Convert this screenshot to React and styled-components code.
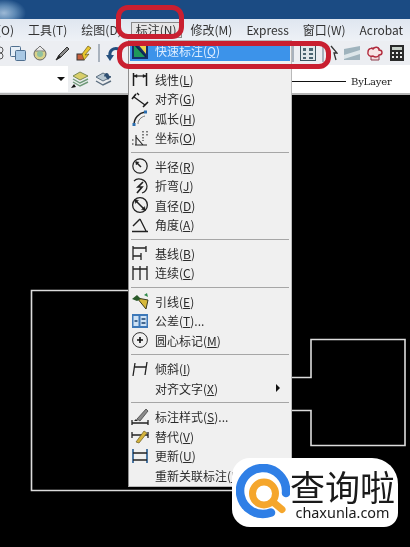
import React from "react";
import styled, { createGlobalStyle } from "styled-components";

const GlobalStyle = createGlobalStyle`
  html, body {
    margin: 0;
    padding: 0;
    background: #000;
  }
`;

const uiFont = `"Noto Sans CJK SC", "Noto Sans", sans-serif`;

// menu icons, all drawn on an 18x18 grid
const icons = {
  quick: (
    <>
      <rect x="1" y="0" width="16" height="17" fill="#14306a" />
      <path d="M3 2 L15 15 L3 15 Z" fill="#1f9a5a" />
      <path d="M6 1 L15 1 L15 12 Z" fill="#e9d44a" />
      <path d="M3 2 L15 15" stroke="#10244f" strokeWidth="1.4" />
    </>
  ),
  linear: (
    <g stroke="#1c1c1c" fill="none">
      <path d="M2.5 3 V16 M15.5 3 V16" strokeWidth="1.5" />
      <path d="M3 6 H15" strokeWidth="1.2" />
      <path d="M3 6 L6 4.5 V7.5 Z M15 6 L12 4.5 V7.5 Z" fill="#1c1c1c" strokeWidth="0.5" />
    </g>
  ),
  aligned: (
    <g stroke="#1c1c1c" fill="none">
      <path d="M3 7 L14 15" strokeWidth="1.2" />
      <path d="M1 9 L5 4 M12 17 L17 12" strokeWidth="1.6" />
      <path d="M6 3 L8 5" strokeWidth="1.4" />
    </g>
  ),
  arc: (
    <>
      <path d="M3 16 C3 9 8 4 14 3" fill="none" stroke="#222" strokeWidth="1.5" />
      <path d="M7 15 C7 11 10 8 14 7" fill="none" stroke="#777" strokeWidth="1" />
      <rect x="1.5" y="14" width="3" height="3" fill="#2c6fb0" />
      <rect x="13" y="1.5" width="3" height="3" fill="#2c6fb0" />
    </>
  ),
  ordinate: (
    <g stroke="#222" fill="none" strokeWidth="1.1">
      <path d="M4 16 H16 M5 16 V6 M12 16 L5 8" />
      <path d="M12 2 V12 M16 2 V8" strokeDasharray="1.5 1.5" />
      <path d="M1 11 H4 M1 15 H3" strokeDasharray="1.5 1.5" />
    </g>
  ),
  radius: (
    <g stroke="#222" fill="none">
      <circle cx="9" cy="9" r="7.2" strokeWidth="1.2" />
      <path d="M5 5 L10 10" strokeWidth="1.5" />
      <path d="M4.5 4.5 L8 5.2 L5.2 8 Z" fill="#222" strokeWidth="0.4" />
    </g>
  ),
  jog: (
    <g stroke="#222" fill="none">
      <path d="M3 4 C7 0 15 2 16 9 C16 12 14 15 11 16" strokeWidth="1.2" />
      <path d="M12 5 L7 10 L11 10 L6 16" strokeWidth="1.7" />
    </g>
  ),
  diameter: (
    <g stroke="#222" fill="none">
      <circle cx="9" cy="9" r="7.4" strokeWidth="1.3" />
      <path d="M5 5 L13 13" strokeWidth="1.6" />
      <path d="M3.6 3.6 L7.5 4.4 L4.4 7.5 Z M14.4 14.4 L10.5 13.6 L13.6 10.5 Z" fill="#222" strokeWidth="0.4" />
    </g>
  ),
  angle: (
    <g stroke="#222" fill="none">
      <path d="M1 15.5 H17 M9 3 L15 15" strokeWidth="1.3" />
      <path d="M2 10 L9 3" strokeWidth="1.5" />
    </g>
  ),
  baseline: (
    <g stroke="#222" fill="none" strokeWidth="1.3">
      <path d="M2 2 V16 M2 4 H15 M2 12 H10 M15 2 V8 M10 9 V16" />
    </g>
  ),
  continued: (
    <g stroke="#222" fill="none" strokeWidth="1.3">
      <path d="M2 2 V16 M9 2 V16 M16 2 V16 M2 5 H16" />
    </g>
  ),
  leader: (
    <>
      <path d="M6 6 L15 17 L17 8 Z" fill="#d8b93a" stroke="#3b3a1a" strokeWidth="1" />
      <path d="M1 7 L6 3 L10 7 L6 9 Z" fill="#2a5a2a" />
      <path d="M13 3 L16 1 L17 5 Z" fill="#2f8a4a" />
    </>
  ),
  tolerance: (
    <>
      <rect x="1" y="2" width="16" height="14" fill="#3d78b8" />
      <rect x="2.5" y="4" width="5" height="10" fill="#cfe2f4" />
      <rect x="9.5" y="4" width="6" height="10" fill="#cfe2f4" />
      <path d="M3.5 9 H6.5 M10.5 7 H14.5 M10.5 11 H14.5" stroke="#17406f" strokeWidth="1.4" />
    </>
  ),
  center: (
    <g stroke="#333" fill="none">
      <circle cx="9" cy="9" r="7.4" strokeWidth="1" />
      <path d="M6 9 H12 M9 6 V12" stroke="#111" strokeWidth="1.6" />
    </g>
  ),
  oblique: (
    <g stroke="#222" fill="none" strokeWidth="1.3">
      <path d="M4 3 L2 16 M16 2 L14 15 M3 7 H15" />
    </g>
  ),
  style: (
    <>
      <path d="M1 15 H17 M1 12 V17 M17 12 V17" stroke="#222" strokeWidth="1.3" fill="none" />
      <path d="M3 13 L5 11 L7 13 Z" fill="#222" />
      <path d="M6 11 L15 1 L17 3 L9 13 Z" fill="#8b8b8b" stroke="#333" strokeWidth="0.7" />
    </>
  ),
  override: (
    <>
      <path d="M1 5 V11 M17 5 V11 M1 8 H17" stroke="#222" strokeWidth="1.3" fill="none" />
      <path d="M5 15 L13 4 L16 6 L8 16 Z" fill="#d5b43d" stroke="#6a5a20" strokeWidth="0.7" />
    </>
  ),
  update: (
    <g fill="none">
      <path d="M2 2 V16 M16 2 V16" stroke="#23598f" strokeWidth="1.6" />
      <path d="M2 6 H16 M2 13 H16" stroke="#222" strokeWidth="1.3" />
    </g>
  ),
};

const menuRows = [
  { label: "快速标注", hot: "Q", icon: "quick", active: true },
  { sep: true },
  { label: "线性", hot: "L", icon: "linear" },
  { label: "对齐", hot: "G", icon: "aligned" },
  { label: "弧长", hot: "H", icon: "arc" },
  { label: "坐标", hot: "O", icon: "ordinate" },
  { sep: true },
  { label: "半径", hot: "R", icon: "radius" },
  { label: "折弯", hot: "J", icon: "jog" },
  { label: "直径", hot: "D", icon: "diameter" },
  { label: "角度", hot: "A", icon: "angle" },
  { sep: true },
  { label: "基线", hot: "B", icon: "baseline" },
  { label: "连续", hot: "C", icon: "continued" },
  { sep: true },
  { label: "引线", hot: "E", icon: "leader" },
  { label: "公差", hot: "T", tail: "...", icon: "tolerance" },
  { label: "圆心标记", hot: "M", icon: "center" },
  { sep: true },
  { label: "倾斜", hot: "I", icon: "oblique" },
  { label: "对齐文字", hot: "X", submenu: true },
  { sep: true },
  { label: "标注样式", hot: "S", tail: "...", icon: "style" },
  { label: "替代", hot: "V", icon: "override" },
  { label: "更新", hot: "U", icon: "update" },
  { label: "重新关联标注", hot: "R" },
];

const Screen = styled.div`
  position: relative;
  width: 410px;
  height: 547px;
  overflow: hidden;
  display: flex;
  flex-direction: column;
  background: #000;
  font-family: ${uiFont};
  filter: blur(0.35px);
`;

const TitleBar = styled.div`
  height: 19px;
  flex: none;
  background: radial-gradient(ellipse 22px 14px at 4px 13px, #9db9d6 0, #5f8ab5 50%, transparent 100%), #1b4b83;
`;

const MenuBar = styled.div`
  height: 22px;
  flex: none;
  display: flex;
  align-items: center;
  gap: 14px;
  margin-left: -3px;
  white-space: nowrap;
  overflow: hidden;
  background: linear-gradient(#dfe6f0, #eef1f6);
`;

const MenuTitle = styled.span`
  font-size: 12px;
  color: #333;
  padding: ${(p) => (p.$open ? "0 5px" : "0")};
  margin: ${(p) => (p.$open ? "0 -5px" : "0")};
  box-shadow: ${(p) => (p.$open ? "inset 0 0 0 1px #8a8a8a" : "none")};
  background: ${(p) => (p.$open ? "#e6e6e6" : "transparent")};
  line-height: 16px;
`;

const ToolBar = styled.div`
  height: 24px;
  flex: none;
  display: flex;
  align-items: center;
  gap: 6px;
  margin-left: -12px;
  background: #eceef2;
  padding-right: 6px;
`;

const ToolGap = styled.div`
  margin-left: auto;
`;

const ToolSep = styled.div`
  width: 2px;
  height: 18px;
  flex: none;
  background: #a9b2bd;
`;

const PropsBar = styled.div`
  height: 30px;
  flex: none;
  box-sizing: border-box;
  display: flex;
  align-items: center;
  gap: 6px;
  background: #eceef0;
  border-bottom: 2px solid #b5b5b5;
`;

const LayerSelect = styled.div`
  width: 68px;
  height: 26px;
  flex: none;
  box-sizing: border-box;
  background: #fff;
  display: flex;
  align-items: center;
  justify-content: flex-end;
  padding-right: 3px;
  margin-right: -3px;
`;

const SelectArrow = styled.div`
  width: 0;
  height: 0;
  border-left: 4px solid transparent;
  border-right: 4px solid transparent;
  border-top: 4px solid #111;
`;

const LineTypeBox = styled.div`
  margin-left: auto;
  width: 118px;
  align-self: stretch;
  flex: none;
  box-sizing: border-box;
  padding-top: 5px;
  background: #fff;
  display: flex;
  align-items: center;
  gap: 5px;
`;

const LineSample = styled.div`
  width: 54px;
  height: 1px;
  background: #111;
`;

const LineName = styled.span`
  font-family: "DejaVu Serif", serif;
  font-size: 10px;
  letter-spacing: -0.2px;
  color: #222;
`;

const Canvas = styled.div`
  position: relative;
  flex: 1;
  background: #000;
`;

const Drawing = styled.svg`
  position: absolute;
  inset: 0;
  display: block;
`;

const PopupMenu = styled.div`
  position: absolute;
  left: 128px;
  top: 40px;
  width: 164px;
  height: 447px;
  box-sizing: border-box;
  background: #f0f0f0;
  border: 1px solid #b9b9b9;
  border-left-color: #8f8f8f;
`;

const Row = styled.div`
  height: 19.5px;
  margin: 0 1px;
  display: grid;
  grid-template-columns: 25px 1fr 14px;
  align-items: center;
  font-size: 12px;
  line-height: 19.5px;
  white-space: nowrap;
  color: ${(p) => (p.$active ? "#dcecff" : "#2b2b2b")};
  background: ${(p) => (p.$active ? "#3c93ea" : "transparent")};
`;

const RowIcon = styled.svg`
  display: block;
  margin-left: 1px;
`;

const RowArrow = styled.div`
  width: 0;
  height: 0;
  border-top: 4px solid transparent;
  border-bottom: 4px solid transparent;
  border-left: 4px solid #111;
`;

const Separator = styled.div`
  height: 9px;
  display: flex;
  align-items: center;
  padding: 0 2px;

  &::after {
    content: "";
    flex: 1;
    height: 1px;
    background: #a6a6a6;
  }
`;

const RedRing = styled.div`
  position: absolute;
  left: ${(p) => p.$x}px;
  top: ${(p) => p.$y}px;
  width: ${(p) => p.$w}px;
  height: ${(p) => p.$h}px;
  box-sizing: border-box;
  border: 5px solid #c91f30;
  border-radius: ${(p) => p.$r}px;
`;

const Watermark = styled.div`
  position: absolute;
  left: 232px;
  top: 458px;
  width: 166px;
  height: 69px;
  box-sizing: border-box;
  padding-left: 4px;
  display: flex;
  align-items: center;
  background: #fff;
  border-radius: 18px 26px 14px 18px;
`;

const BrandText = styled.div`
  display: flex;
  flex-direction: column;
  align-items: center;
  margin-top: 3px;
  color: #1a1a1a;
`;

const BrandName = styled.div`
  font-size: 35px;
  line-height: 38px;
  white-space: nowrap;
`;

const BrandUrl = styled.div`
  font-family: "Noto Sans", sans-serif;
  font-size: 14.4px;
  line-height: 16px;
`;

function Tool({ w = 16, h = 16, children }) {
  return (
    <svg width={w} height={h} viewBox={`0 0 ${w} ${h}`} style={{ flex: "none" }}>
      {children}
    </svg>
  );
}

function MenuRow({ row }) {
  return (
    <Row $active={row.active}>
      {row.icon ? (
        <RowIcon width="18" height="18" viewBox="0 0 18 18">
          {icons[row.icon]}
        </RowIcon>
      ) : (
        <span />
      )}
      <span>
        {row.label}(<u>{row.hot}</u>){row.tail}
      </span>
      {row.submenu && <RowArrow />}
    </Row>
  );
}

export default function App() {
  return (
    <>
      <GlobalStyle />
      <Screen>
        <TitleBar />
        <MenuBar>
          <MenuTitle>(O)</MenuTitle>
          <MenuTitle>工具(T)</MenuTitle>
          <MenuTitle>绘图(D)</MenuTitle>
          <MenuTitle $open>标注(N)</MenuTitle>
          <MenuTitle>修改(M)</MenuTitle>
          <MenuTitle>Express</MenuTitle>
          <MenuTitle>窗口(W)</MenuTitle>
          <MenuTitle>Acrobat</MenuTitle>
        </MenuBar>

        <ToolBar>
          <Tool>
            <circle cx="12" cy="5" r="3" fill="none" stroke="#555" />
            <circle cx="12" cy="11" r="3" fill="none" stroke="#555" />
          </Tool>
          <Tool>
            <rect x="0.5" y="1.5" width="10" height="10" rx="1" fill="#e6eef6" stroke="#4f6f8f" />
            <rect x="5.5" y="5.5" width="10" height="10" rx="1" fill="#a9c8e4" stroke="#4f6f8f" />
          </Tool>
          <Tool>
            <circle cx="8" cy="9" r="6" fill="#d9d28a" stroke="#666" />
            <path d="M3 6 L8 1 L13 6 Z" fill="#e8e8e8" stroke="#777" />
            <circle cx="8" cy="9" r="3" fill="#8fc0a0" />
          </Tool>
          <Tool>
            <path d="M2 15 L5 10 L13 2 L15 4 L7 12 Z" fill="#8a8a8a" stroke="#333" />
            <path d="M2 15 L5 10 L7 12 Z" fill="#222" />
          </Tool>
          <Tool>
            <rect x="1" y="9" width="7" height="6" fill="#c9603c" stroke="#333" />
            <path d="M6 9 L12 1 L15 3 L9 10 L13 9 L8 15 Z" fill="#e8c52e" stroke="#6b5a15" strokeWidth="0.7" />
          </Tool>
          <ToolSep />
          <Tool>
            <path d="M13 4 C7 2 3 6 4 11" fill="none" stroke="#24507f" strokeWidth="3" />
            <path d="M0 10 L8 10 L4 16 Z" fill="#24507f" />
          </Tool>
          <ToolGap />
          <ToolSep />
          <Tool>
            <rect x="0.5" y="0.5" width="15" height="15" fill="#dfe7ea" stroke="#3c5560" />
            <path
              d="M3 3 H6 V6 H3 Z M9 3 H13 V6 H9 Z M3 8 H6 V10 H3 Z M9 8 H13 V10 H9 Z M3 12 H6 V14 H3 Z M9 12 H13 V14 H9 Z"
              fill="#4c6672"
            />
          </Tool>
          <ToolSep />
          <Tool w={8}>
            <path d="M1 1 L7 8 L4 8 L6 15" fill="none" stroke="#333" strokeWidth="1.3" />
          </Tool>
          <Tool>
            <path d="M0 4 L16 1 V15 L0 15 Z" fill="#9fb3bd" />
            <path d="M0 10 L16 5 V9 L0 14 Z" fill="#dde6ea" />
          </Tool>
          <Tool w={18} h={17}>
            <path d="M5 15 V3 H13 V15 Z" fill="#f4dcdc" stroke="#8a3a4a" />
            <path
              d="M2 7 C2 3 6 3 7 4 C9 1 13 2 13 5 C17 5 17 10 13 10 C12 13 8 12 7 11 C4 12 1 10 2 7 Z"
              fill="#f7e4e4"
              stroke="#b22a3c"
              strokeWidth="1.4"
            />
          </Tool>
          <Tool w={14}>
            <rect width="14" height="16" fill="#2a2a2a" />
            <rect x="2" y="2" width="10" height="3" fill="#c8d0c8" />
            <path
              d="M2 7 H4 V9 H2 Z M6 7 H8 V9 H6 Z M10 7 H12 V9 H10 Z M2 11 H4 V13 H2 Z M6 11 H8 V13 H6 Z M10 11 H12 V13 H10 Z"
              fill="#e8e8e8"
            />
          </Tool>
        </ToolBar>

        <PropsBar>
          <LayerSelect>
            <SelectArrow />
          </LayerSelect>
          <Tool w={18} h={20}>
            <path d="M2 7 L9 3 L17 7 L9 11 Z" fill="#d9cf6a" stroke="#7b8a55" />
            <path d="M2 10 L9 14 L17 10 M2 13 L9 17 L17 13" fill="none" stroke="#6f9a78" strokeWidth="1.4" />
            <path d="M0 19 L3 15 L5 18 Z" fill="#111" />
          </Tool>
          <Tool w={17} h={20}>
            <path d="M1 8 L8 4 L16 8 L8 12 Z" fill="#b9c8d2" stroke="#5c6f80" />
            <path d="M1 12 L8 16 L16 12" fill="none" stroke="#5c6f80" strokeWidth="1.4" />
            <path d="M9 8 C9 3 14 3 14 7 L16 7 L13 11 L10 7" fill="#2f4f72" />
          </Tool>
          <LineTypeBox>
            <LineSample />
            <LineName>ByLayer</LineName>
          </LineTypeBox>
        </PropsBar>

        <Canvas>
          <Drawing width="410" height="452" viewBox="0 95 410 452">
            <g fill="none" stroke="#dcdcdc" strokeWidth="1.6">
              <path d="M128 290.5 H31.5 V490.5 H232" />
              <path d="M292 377.5 H311 V339.5 H405 V445.5 H311 V410.5 H292" />
            </g>
          </Drawing>
        </Canvas>

        <PopupMenu>
          {menuRows.map((row, i) =>
            row.sep ? <Separator key={i} /> : <MenuRow key={i} row={row} />
          )}
        </PopupMenu>

        <RedRing $x={116} $y={5} $w={68} $h={34} $r={12} />
        <RedRing $x={117} $y={41} $w={214} $h={28} $r={12} />

        <Watermark>
          <svg width="54" height="58" viewBox="0 0 54 58" style={{ flex: "none" }}>
            <path
              d="M50 29 A23 23 0 1 0 35 48.6"
              fill="none"
              stroke="#2f7fe6"
              strokeWidth="8.5"
              strokeLinecap="round"
            />
            <circle cx="28" cy="29.5" r="11.5" fill="none" stroke="#f5a62c" strokeWidth="7" />
            <path d="M37 38 L46 45.5" stroke="#f5a62c" strokeWidth="7" strokeLinecap="round" />
          </svg>
          <BrandText>
            <BrandName>查询啦</BrandName>
            <BrandUrl>chaxunla.com</BrandUrl>
          </BrandText>
        </Watermark>
      </Screen>
    </>
  );
}
